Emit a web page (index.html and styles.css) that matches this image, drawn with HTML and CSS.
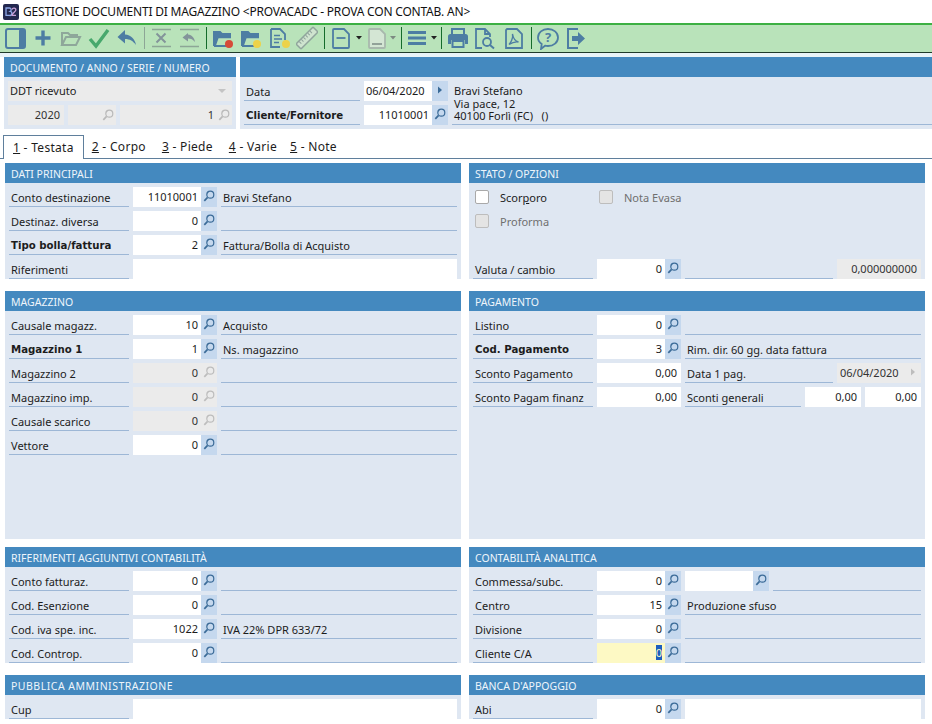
FILE: index.html
```html
<!DOCTYPE html>
<html lang="it">
<head>
<meta charset="utf-8">
<title>Gestione documenti di magazzino</title>
<link rel="stylesheet" href="styles.css">
</head>
<body>
<svg class="defs" width="0" height="0" aria-hidden="true">
  <symbol id="lens" viewBox="0 0 12 12"><circle cx="7.3" cy="4.700" r="3.500" fill="none" stroke="currentColor" stroke-width="1.200"/><path d="M4.600 7.400 1.300 10.800" stroke="currentColor" stroke-width="1.700" fill="none"/></symbol>
  <symbol id="tri" viewBox="0 0 6 8"><path d="M1 0.500 5 4 1 7.500z" fill="currentColor"/></symbol>
  <symbol id="folder" viewBox="0 0 22 24"><path d="M2 20V6h6l2 2h8v3" fill="none" stroke="#4d7da3" stroke-width="2"/><path d="M2 6h6l2 2h8v3H6l-3 9H2z" fill="#4d7da3"/><path d="M3 20l3-8.500h13" fill="none" stroke="#4d7da3" stroke-width="1.500"/><path d="M2 20h12" stroke="#4d7da3" stroke-width="2"/></symbol>
</svg>

<header class="title">
  <svg class="logo" viewBox="0 0 16 16"><rect width="16" height="16" rx="2" fill="#23284f"/><path d="M3 4h3.400a1.800 1.800 0 0 1 .8 3.400 2 2 0 0 1-.8 4H3z" fill="none" stroke="#8fa8e8" stroke-width="1.300"/><path d="M9 5.500c.5-2 4.300-1.700 3.800.6-.3 1.500-3.300 3-3.800 5.200h4" fill="none" stroke="#c9a0d8" stroke-width="1.300"/></svg>
  <span class="title-text">GESTIONE DOCUMENTI DI MAGAZZINO &lt;PROVACADC - PROVA CON CONTAB. AN&gt;</span>
</header>

<nav class="toolbar">
  <svg class="ti" viewBox="0 0 22 24"><rect x="2" y="3" width="19" height="19" rx="2" fill="none" stroke="#4d7da3" stroke-width="2"/><rect x="15" y="3" width="6" height="19" rx="1.500" fill="#4d7da3"/></svg>
  <svg class="ti" viewBox="0 0 22 24"><path d="M11 4.500v15M3.500 12h15" stroke="#4d7da3" stroke-width="3.400" fill="none"/></svg>
  <svg class="ti" viewBox="0 0 22 24"><path d="M2 19V7h6l2 2h7v2M2 19l4-8h14l-4 8z" fill="none" stroke="#8ea79a" stroke-width="2"/></svg>
  <svg class="ti" viewBox="0 0 22 24"><path d="M2 13l6 7L20 4" fill="none" stroke="#47a86c" stroke-width="3.400"/></svg>
  <svg class="ti" viewBox="0 0 22 24"><path d="M9 4 1.500 11 9 17.500V13c5 0 8 2 11 6-1-6-5-10-11-10.500z" fill="#4d7da3"/></svg>
  <i class="sep light"></i>
  <svg class="ti" viewBox="0 0 22 24"><path d="M2 3.500h19M2 20.500h19" stroke="#8da696" stroke-width="1.500"/><path d="M6.500 7.500l9 9M15.500 7.500l-9 9" stroke="#83949a" stroke-width="2"/></svg>
  <svg class="ti" viewBox="0 0 22 24"><path d="M2 3.500h19M2 20.500h19" stroke="#8da696" stroke-width="1.500"/><path d="M10 7 4.500 11.500 10 15.500v-3c3 0 5 1 7 3.500-.5-4-3-7-7-7.500z" fill="#83949a"/></svg>
  <i class="sep"></i>
  <svg class="ti" viewBox="0 0 22 24"><use href="#folder"/><circle cx="17" cy="18" r="4" fill="#d64a38"/></svg>
  <svg class="ti" viewBox="0 0 22 24"><use href="#folder"/><circle cx="17" cy="18" r="4" fill="#ecd24a"/></svg>
  <svg class="ti" viewBox="0 0 22 24"><path d="M3 3h9l5 5v6M3 3v18h9" fill="none" stroke="#4d7da3" stroke-width="1.800"/><path d="M6 9.500h6M6 13h8M6 16.500h5" stroke="#4d7da3" stroke-width="1.400"/><circle cx="18" cy="18" r="4" fill="#ecd24a"/></svg>
  <svg class="ti" viewBox="0 0 22 24"><g transform="rotate(-45 11 12)"><rect x="-1" y="8.500" width="24" height="7" rx="1" fill="#cfe4cf" stroke="#90a59c" stroke-width="1.500"/><path d="M3 9v3M6 9v3M9 9v3M12 9v3M15 9v3M18 9v3" stroke="#90a59c"/></g></svg>
  <i class="sep"></i>
  <svg class="ti" viewBox="0 0 22 24"><path d="M4 3h10l5 5v13a1 1 0 0 1-1 1H4a1 1 0 0 1-1-1V4a1 1 0 0 1 1-1z" fill="none" stroke="#4d7da3" stroke-width="1.800"/><path d="M6.500 12h9" stroke="#4d7da3" stroke-width="1.800"/></svg>
  <svg class="caret" viewBox="0 0 6 4"><path d="M0 0h6L3 3.500z" fill="#222"/></svg>
  <svg class="ti next" viewBox="0 0 22 24"><path d="M4 3h10l5 5v13a1 1 0 0 1-1 1H4a1 1 0 0 1-1-1V4a1 1 0 0 1 1-1z" fill="#d4e6d4" stroke="#a8b8ad" stroke-width="1.800"/><path d="M6 18h10" stroke="#8b9a92" stroke-width="1.800"/></svg>
  <svg class="caret" viewBox="0 0 6 4"><path d="M0 0h6L3 3.500z" fill="#7d8a82"/></svg>
  <i class="sep after-caret"></i>
  <svg class="ti menu" viewBox="0 0 22 24"><path d="M1 6.500h18M1 12h18M1 17.500h18" stroke="#4d7da3" stroke-width="3"/></svg>
  <svg class="caret" viewBox="0 0 6 4"><path d="M0 0h6L3 3.500z" fill="#222"/></svg>
  <i class="sep after-menu"></i>
  <svg class="ti" viewBox="0 0 22 24"><path d="M5 8V3h12v5" fill="none" stroke="#4d7da3" stroke-width="2"/><path d="M3.500 8h15A2.500 2.500 0 0 1 21 10.500V18h-3v-4H4v4H1v-7.500A2.500 2.500 0 0 1 3.500 8z" fill="#4d7da3"/><path d="M5.500 15h11v6h-11z" fill="none" stroke="#4d7da3" stroke-width="2"/></svg>
  <svg class="ti" viewBox="2 0 22 24"><path d="M9 22H3V3h9l5 5v3M12 3v5h5" fill="none" stroke="#4d7da3" stroke-width="1.800"/><circle cx="14" cy="16" r="4" fill="none" stroke="#4d7da3" stroke-width="1.800"/><path d="M17 19l4 3.500" stroke="#4d7da3" stroke-width="2"/></svg>
  <svg class="ti" viewBox="0 0 22 24"><path d="M4 3h10l5 5v14H3V4z" fill="none" stroke="#4d7da3" stroke-width="1.800"/><path d="M9.500 8c1 4-2 9-3.500 10.500 3-2 6-3 9.500-2.500-4-1-5.500-5-6-8z" fill="none" stroke="#4d7da3" stroke-width="1.400"/></svg>
  <i class="sep"></i>
  <svg class="ti" viewBox="0 0 22 24"><path d="M11 3c5.500 0 10 3.500 10 8.500S16.500 20 11 20c-1 0-2 0-3-.3L4 23l.7-5C2.500 16.500 1 14.300 1 11.500 1 6.500 5.500 3 11 3z" fill="none" stroke="#4d7da3" stroke-width="1.800"/><text class="q" x="11" y="16" text-anchor="middle">?</text></svg>
  <svg class="ti" viewBox="0 0 22 24"><path d="M13 3H3v19h10" fill="none" stroke="#4d7da3" stroke-width="2"/><path d="M7 10h6V6l7 6.500-7 6.500v-4H7z" fill="#4d7da3"/></svg>
</nav>

<div class="strip"></div>

<section class="head">
  <div class="doc">
    <h2 class="bar">DOCUMENTO / ANNO / SERIE / NUMERO</h2>
    <div class="doc-body">
      <div class="combo"><span>DDT ricevuto</span><svg class="combo-caret" viewBox="0 0 8 4"><path d="M0 0h8L4 4z" fill="#c4c4c4"/></svg></div>
      <div class="doc-row">
        <div class="dis-box w56"><span>2020</span></div>
        <div class="dis-box w48"><svg class="lens-in"><use href="#lens"/></svg></div>
        <div class="dis-box w112"><span>1</span><svg class="lens-in"><use href="#lens"/></svg></div>
      </div>
    </div>
  </div>
  <div class="client">
    <h2 class="bar">&nbsp;</h2>
    <div class="client-body">
      <div class="client-fields">
        <div class="row client-row"><span class="lbl w116">Data</span><span class="val date">06/04/2020</span><span class="btn"><svg class="tri"><use href="#tri"/></svg></span></div>
        <div class="row client-row"><span class="lbl w116 b">Cliente/Fornitore</span><span class="val">11010001</span><span class="btn"><svg class="lens"><use href="#lens"/></svg></span></div>
      </div>
      <div class="address">Bravi Stefano<br>Via pace, 12<br>40100 Forlì (FC) &nbsp; ()</div>
    </div>
  </div>
</section>

<div class="tabs">
  <span class="tab active"><u>1</u> - Testata</span>
  <span class="tab"><u>2</u> - Corpo</span>
  <span class="tab"><u>3</u> - Piede</span>
  <span class="tab tight"><u>4</u> - Varie</span>
  <span class="tab"><u>5</u> - Note</span>
</div>

<main class="grid">
  <section class="panel">
    <h2 class="bar">DATI PRINCIPALI</h2>
    <div class="body">
      <div class="row"><span class="lbl">Conto destinazione</span><span class="val">11010001</span><span class="btn"><svg class="lens"><use href="#lens"/></svg></span><span class="desc">Bravi Stefano</span></div>
      <div class="row"><span class="lbl">Destinaz. diversa</span><span class="val">0</span><span class="btn"><svg class="lens"><use href="#lens"/></svg></span><span class="desc"></span></div>
      <div class="row"><span class="lbl b">Tipo bolla/fattura</span><span class="val">2</span><span class="btn"><svg class="lens"><use href="#lens"/></svg></span><span class="desc">Fattura/Bolla di Acquisto</span></div>
      <div class="row"><span class="lbl">Riferimenti</span><span class="val fill"></span></div>
    </div>
  </section>
  <section class="panel">
    <h2 class="bar">STATO / OPZIONI</h2>
    <div class="body">
      <div class="row"><span class="check"></span><span class="chk-lbl w124">Scor<u>p</u>oro</span><span class="check off"></span><span class="chk-lbl off">Nota Evasa</span></div>
      <div class="row"><span class="check off"></span><span class="chk-lbl off">Proforma</span></div>
      <div class="row"></div>
      <div class="row"><span class="lbl">Valuta / cambio</span><span class="val">0</span><span class="btn"><svg class="lens"><use href="#lens"/></svg></span><span class="desc short"></span><span class="val off w84">0,000000000</span></div>
    </div>
  </section>

  <section class="panel">
    <h2 class="bar">MAGAZZINO</h2>
    <div class="body tall">
      <div class="row"><span class="lbl">Causale magazz.</span><span class="val">10</span><span class="btn"><svg class="lens"><use href="#lens"/></svg></span><span class="desc">Acquisto</span></div>
      <div class="row"><span class="lbl b">Magazzino 1</span><span class="val">1</span><span class="btn"><svg class="lens"><use href="#lens"/></svg></span><span class="desc">Ns. magazzino</span></div>
      <div class="row"><span class="lbl">Magazzino 2</span><span class="val off">0</span><span class="btn off"><svg class="lens"><use href="#lens"/></svg></span><span class="desc"></span></div>
      <div class="row"><span class="lbl">Magazzino imp.</span><span class="val off">0</span><span class="btn off"><svg class="lens"><use href="#lens"/></svg></span><span class="desc"></span></div>
      <div class="row"><span class="lbl">Causale scarico</span><span class="val off">0</span><span class="btn off"><svg class="lens"><use href="#lens"/></svg></span><span class="desc"></span></div>
      <div class="row"><span class="lbl">Vettore</span><span class="val">0</span><span class="btn"><svg class="lens"><use href="#lens"/></svg></span><span class="desc"></span></div>
    </div>
  </section>
  <section class="panel">
    <h2 class="bar">PAGAMENTO</h2>
    <div class="body tall">
      <div class="row"><span class="lbl">Listino</span><span class="val">0</span><span class="btn"><svg class="lens"><use href="#lens"/></svg></span><span class="desc"></span></div>
      <div class="row"><span class="lbl b">Cod. Pagamento</span><span class="val">3</span><span class="btn"><svg class="lens"><use href="#lens"/></svg></span><span class="desc">Rim. dir. 60 gg. data fattura</span></div>
      <div class="row"><span class="lbl">Sconto Pagamento</span><span class="val w84">0,00</span><span class="desc short">Data 1 pag.</span><span class="val off w68 center">06/04/2020</span><span class="btn off"><svg class="tri"><use href="#tri"/></svg></span></div>
      <div class="row"><span class="lbl">Sconto Pagam finanz</span><span class="val w84">0,00</span><span class="desc w116">Sconti generali</span><span class="val w56">0,00</span><span class="val w56">0,00</span></div>
    </div>
  </section>

  <section class="panel">
    <h2 class="bar">RIFERIMENTI AGGIUNTIVI CONTABILITÀ</h2>
    <div class="body">
      <div class="row"><span class="lbl">Conto fatturaz.</span><span class="val">0</span><span class="btn"><svg class="lens"><use href="#lens"/></svg></span><span class="desc"></span></div>
      <div class="row"><span class="lbl">Cod. Esenzione</span><span class="val">0</span><span class="btn"><svg class="lens"><use href="#lens"/></svg></span><span class="desc"></span></div>
      <div class="row"><span class="lbl">Cod. iva spe. inc.</span><span class="val">1022</span><span class="btn"><svg class="lens"><use href="#lens"/></svg></span><span class="desc">IVA 22% DPR 633/72</span></div>
      <div class="row"><span class="lbl">Cod. Controp.</span><span class="val">0</span><span class="btn"><svg class="lens"><use href="#lens"/></svg></span><span class="desc"></span></div>
    </div>
  </section>
  <section class="panel">
    <h2 class="bar">CONTABILITÀ ANALITICA</h2>
    <div class="body">
      <div class="row"><span class="lbl">Commessa/subc.</span><span class="val">0</span><span class="btn"><svg class="lens"><use href="#lens"/></svg></span><span class="val w68"></span><span class="btn no-gap"><svg class="lens"><use href="#lens"/></svg></span><span class="desc rest"></span></div>
      <div class="row"><span class="lbl">Centro</span><span class="val">15</span><span class="btn"><svg class="lens"><use href="#lens"/></svg></span><span class="desc">Produzione sfuso</span></div>
      <div class="row"><span class="lbl">Divisione</span><span class="val">0</span><span class="btn"><svg class="lens"><use href="#lens"/></svg></span><span class="desc"></span></div>
      <div class="row"><span class="lbl">Cliente C/A</span><span class="val focus"><mark>0</mark></span><span class="btn"><svg class="lens"><use href="#lens"/></svg></span><span class="desc"></span></div>
    </div>
  </section>

  <section class="panel">
    <h2 class="bar spread">PUBBLICA AMMINISTRAZIONE</h2>
    <div class="body">
      <div class="row"><span class="lbl">Cup</span><span class="val fill"></span></div>
    </div>
  </section>
  <section class="panel">
    <h2 class="bar">BANCA D'APPOGGIO</h2>
    <div class="body">
      <div class="row"><span class="lbl">Abi</span><span class="val">0</span><span class="btn"><svg class="lens"><use href="#lens"/></svg></span><span class="val fill"></span></div>
    </div>
  </section>
</main>
</body>
</html>
```

FILE: styles.css
```css
* { box-sizing: border-box; }
html, body { margin: 0; padding: 0; background: #fff; }
body {
  width: 932px;
  height: 724px;
  overflow: hidden;
  font-family: "Noto Sans", "Open Sans", sans-serif;
  font-size: 11px;
  line-height: 14px;
  color: #1c1c1c;
}
.defs { position: absolute; }

.title { height: 23px; display: flex; align-items: center; padding-left: 3px; gap: 4px; }
.logo { width: 16px; height: 16px; }
.title-text { font-size: 12px; letter-spacing: -.2px; color: #111; white-space: nowrap; }

.toolbar {
  height: 30px;
  display: flex;
  align-items: center;
  padding: 0 0 1px 4px;
  background: #b9e3ba;
  border-top: 2px solid #3cb043;
  border-bottom: 1px solid #1f3a2a;
}
.ti { width: 22px; height: 24px; margin-right: 6px; flex: none; }
.ti.next { margin-left: -4px; margin-right: 4px; }
.ti.menu { margin-right: 4px; }
.caret { width: 6px; height: 4px; margin-right: 8px; flex: none; }
.ti + .caret { margin-left: -2px; }
.sep { width: 1px; height: 22px; background: #156b2b; margin-right: 5px; flex: none; }
.sep.light { background: #8da696; }
.sep.after-caret { margin-left: -3px; }
.sep.after-menu { margin-left: -4px; }
.q { font: bold 13px "Noto Sans", sans-serif; fill: #4d7da3; }

.strip { height: 4px; background: #e8f3f8; }

.bar {
  margin: 0;
  height: 20px;
  padding-left: 6px;
  background: #4489bf;
  color: #eef5fb;
  font-size: 10.500px;
  font-weight: 400;
  line-height: 22px;
  white-space: nowrap;
}
.bar.spread { letter-spacing: .5px; }

.head { display: flex; gap: 4px; padding-left: 4px; }
.doc { width: 232px; flex: none; }
.client { flex: 1; }
.doc-body, .client-body { background: #dfe7f2; height: 52px; padding: 4px; }
.doc-body { display: flex; flex-direction: column; gap: 4px; }
.combo {
  height: 20px;
  background: #ebebeb;
  padding: 0 6px 0 2px;
  display: flex;
  align-items: center;
  justify-content: space-between;
}
.combo-caret { width: 8px; height: 4px; }
.doc-row { display: flex; gap: 4px; }
.dis-box {
  height: 20px;
  background: #ebebeb;
  display: flex;
  align-items: center;
  justify-content: flex-end;
  color: #333;
}
.dis-box span { margin-right: 4px; }
.lens-in { width: 12px; height: 12px; color: #b9b9b9; margin-right: 2px; flex: none; }
.w56 { width: 56px; }
.w48 { width: 48px; }
.w112 { width: 112px; }

.client-body { display: flex; padding-right: 0; }
.client-fields { display: flex; flex-direction: column; gap: 4px; flex: none; }
.row.client-row { margin-bottom: 0; }
.address {
  margin-left: 4px;
  flex: 1;
  height: 44px;
  line-height: 12.500px;
  padding: 4px 0 0 2px;
  border-bottom: 1px solid #9db7d6;
  white-space: nowrap;
}

.tabs {
  display: flex;
  align-items: flex-end;
  height: 30px;
  padding: 6px 0 0 3px;
  border-bottom: 1px solid #5f7f9c;
  font-size: 12px;
  letter-spacing: .3px;
}
.tab { padding: 0 5px; height: 23px; line-height: 24px; margin-right: 6px; white-space: nowrap; }
.tab.tight { margin-right: 3px; }
.tab.active {
  height: 24px;
  margin-bottom: -1px;
  padding: 0 9px;
  background: #fff;
  border: 1px solid #5f7f9c;
  border-bottom: 0;
  margin-right: 3px;
}
.tab u { text-underline-offset: 1px; }

.grid {
  display: grid;
  grid-template-columns: 456px 456px;
  column-gap: 8px;
  row-gap: 8px;
  padding: 4px 0 0 5px;
}
.body { background: #dfe7f2; padding: 4px 4px 0; }
.body.tall { height: 228px; }

.row { display: flex; height: 20px; margin-bottom: 4px; align-items: stretch; }
.lbl {
  width: 120px;
  flex: none;
  border-bottom: 1px solid #9db7d6;
  padding: 4px 0 0 2px;
  white-space: nowrap;
  margin-right: 4px;
}
.w116 { width: 116px; }
.b { font-family: "DejaVu Sans", sans-serif; font-weight: 700; font-size: 10.200px; }
.val {
  width: 68px;
  flex: none;
  background: #fff;
  text-align: right;
  padding: 3px 3px 0 0;
  white-space: nowrap;
}
.val.date { text-align: left; padding-left: 2px; }
.val.fill { flex: 1; width: auto; }
.row .btn + .val.fill { margin: 0 0 0 4px; }
.val.off { background: #ebebeb; color: #333; }
.val.focus { background: #fdf9c4; }
mark { background: #1d5fbe; color: #fdf9c4; }
.val.w84 { width: 84px; padding-right: 4px; }
.val.w68 { width: 68px; }
.val.w56 { width: 56px; padding-right: 4px; }
.val.center { text-align: left; padding-left: 3px; }
.val.w56 + .val.w56 { margin-left: 4px; }
.desc + .val { margin-left: 4px; }
.btn + .val.w68 { margin-left: 4px; }
.btn {
  width: 16px;
  flex: none;
  background: #c5d8ee;
  display: flex;
  align-items: center;
  justify-content: center;
  padding-bottom: 2px;
  color: #3b6b98;
}
.btn.off { background: #ebebeb; color: #bdbdbd; }
.lens { width: 12px; height: 12px; }
.tri { width: 6px; height: 8px; }
.desc {
  width: 236px;
  flex: none;
  margin-left: 4px;
  padding: 4px 0 0 2px;
  border-bottom: 1px solid #9db7d6;
  white-space: nowrap;
}
.desc.short { width: 148px; }
.val + .desc { margin-left: 4px; }
.desc.w116 { width: 116px; }
.desc.rest { width: 148px; }
.check {
  width: 14px;
  height: 14px;
  flex: none;
  margin: 3px 0 0 2px;
  background: #fff;
  border: 1px solid #a9a9a9;
  border-radius: 2px;
}
.check.off { background: #e4e4e4; border-color: #bdbdbd; }
.chk-lbl { margin-left: 11px; padding-top: 4px; }
.chk-lbl.off { color: #6f6f6f; }
.w124 { width: 97px; flex: none; }
```
